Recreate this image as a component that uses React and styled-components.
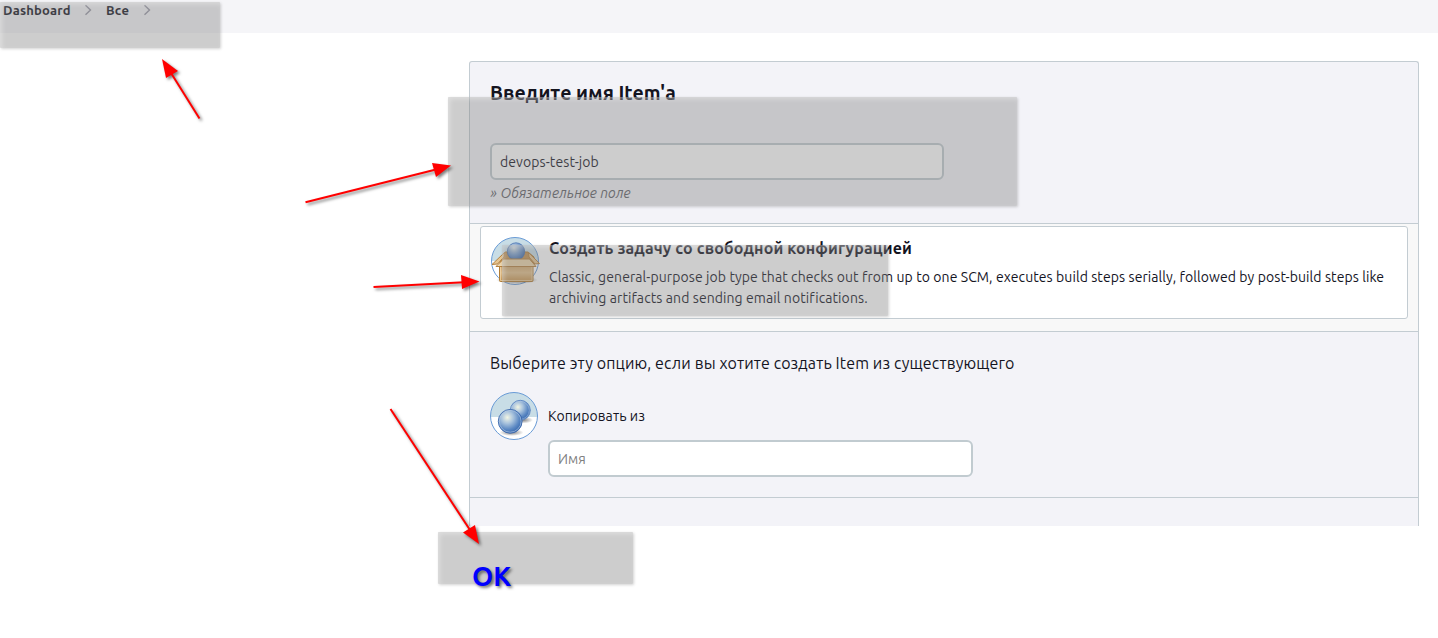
import React from "react";
import styled, { createGlobalStyle } from "styled-components";

const GlobalStyle = createGlobalStyle`
  * { box-sizing: border-box; }
  body {
    margin: 0;
    background: #fff;
    color: #14141f;
    font-family: Ubuntu, "Noto Sans", sans-serif;
    overflow: hidden;
  }
`;

const Page = styled.div`
  position: relative;
  height: 638px;
`;

const Breadcrumbs = styled.header`
  display: flex;
  height: 33px;
  padding-left: 3px;
  background: #f5f5f8;
`;

const Crumb = styled.span`
  width: ${(p) => p.$width}px;
  font-size: 13px;
  font-weight: 600;
  line-height: 20px;
  letter-spacing: 0.2px;
`;

const Chevron = styled.svg`
  width: 8px;
  height: 12px;
  margin: 4px 14px 0 0;
  fill: none;
  stroke: #9a9aa8;
  stroke-width: 1.4;
`;

const Main = styled.main`
  padding: 28px 19px 0 469px;
`;

const Panel = styled.form`
  border: 1px solid #c3ccd2;
  border-bottom: 0;
  border-radius: 3px 3px 0 0;
  background: #f3f3f8;
  overflow: hidden;
`;

const Section = styled.section`
  height: ${(p) => p.$height}px;
  padding: ${(p) => p.$padding || "0"};
  background: ${(p) => (p.$plain ? "#f8f8f8" : "transparent")};
  border-bottom: ${(p) => (p.$last ? "0" : "1px solid #c3ccd2")};
`;

const Heading = styled.h1`
  margin: 0 0 37px;
  font-size: 19.5px;
  font-weight: 700;
  line-height: 26px;
`;

const TextInput = styled.input`
  display: block;
  width: ${(p) => p.$width}px;
  height: 37px;
  padding: 0 8px;
  border: 2px solid #c1cbd0;
  border-radius: 6px;
  background: #fff;
  color: #14141f;
  font: 14px Ubuntu, "Noto Sans", sans-serif;
  letter-spacing: 0.09px;
  outline: 0;
  &::placeholder { color: #7f7f7f; }
`;

const Hint = styled.div`
  margin-top: 3px;
  color: #5f5f66;
  font-size: 14px;
  font-style: italic;
  line-height: 20px;
  letter-spacing: 0.1px;
`;

const JobCard = styled.div`
  display: flex;
  gap: 10px;
  height: 93px;
  padding: 10px;
  border: 1px solid #c3ccd2;
  border-radius: 3px;
  background: #fff;
`;

const JobTitle = styled.div`
  margin-bottom: 8px;
  font-size: 16px;
  font-weight: 700;
  line-height: 22px;
  letter-spacing: 0.135px;
`;

const JobText = styled.div`
  font-size: 14px;
  line-height: 21px;
  letter-spacing: 0.086px;
`;

const Icon = styled.svg`
  flex: none;
  width: 48px;
  height: 48px;
  overflow: visible;
`;

const CopyIntro = styled.p`
  margin: 0 0 17px;
  font-size: 16px;
  line-height: 24px;
  letter-spacing: 0.12px;
`;

const CopyRow = styled.div`
  display: flex;
  gap: 10px;
`;

const CopyLabel = styled.label`
  display: block;
  margin: 14px 0;
  font-size: 14px;
  line-height: 20px;
  letter-spacing: 0.09px;
`;

const Highlight = styled.div`
  position: absolute;
  left: ${(p) => p.$x}px;
  top: ${(p) => p.$y}px;
  width: ${(p) => p.$w}px;
  height: ${(p) => p.$h}px;
  border-radius: 1px;
  background: rgba(127, 127, 127, 0.39);
  box-shadow:
    inset 2px 2px 5px rgba(255, 255, 255, 0.35),
    1px 1px 3px rgba(0, 0, 0, 0.18);
`;

const OkButton = styled.span`
  position: absolute;
  left: 34px;
  top: 29px;
  color: #00f;
  font-size: 27px;
  font-weight: 700;
  line-height: 30px;
  text-shadow: 2px 2px 3px rgba(0, 0, 0, 0.5);
`;

const ArrowLayer = styled.svg`
  position: absolute;
  left: 0;
  top: 0;
  filter: drop-shadow(2px 2px 1.5px rgba(0, 0, 0, 0.5));
`;

const ARROWS = [
  { line: "M199.5 118.5L171 73", head: "162,59 178,71 166,78" },
  { line: "M305.5 202.3L436 169.5", head: "451,165.5 432,163 436,177" },
  { line: "M373.5 287L464 282.3", head: "479.5,281.5 461,275 462,289" },
  { line: "M390.5 409L470 530", head: "479,544 463,532.5 475,525" },
];

const Separator = () => (
  <Chevron viewBox="0 0 8 12">
    <path d="M1.5 1.2L6.5 6L1.5 10.8" />
  </Chevron>
);

const BoxIcon = () => (
  <Icon viewBox="0 0 48 48">
    <defs>
      <radialGradient id="ball" cx=".38" cy=".3" r=".75">
        <stop offset="0" stopColor="#d7e2e8" />
        <stop offset=".5" stopColor="#7fa3d1" />
        <stop offset="1" stopColor="#3d6aab" />
      </radialGradient>
      <linearGradient id="carton" x1="0" y1="0" x2="0" y2="1">
        <stop offset="0" stopColor="#cfa468" />
        <stop offset=".5" stopColor="#e3c08c" />
        <stop offset="1" stopColor="#c8954f" />
      </linearGradient>
      <radialGradient id="boxShade">
        <stop offset="0" stopColor="#000" stopOpacity=".6" />
        <stop offset="1" stopColor="#000" stopOpacity="0" />
      </radialGradient>
      <clipPath id="boxSky"><path d="M0 0H48V24H0Z" /></clipPath>
    </defs>
    <circle cx="24" cy="24" r="23.5" fill="#fff" />
    <circle cx="24" cy="24" r="23.5" fill="#c8dde6" clipPath="url(#boxSky)" />
    <circle cx="24" cy="24" r="23.5" fill="none" stroke="#699bd6" />
    <ellipse cx="26" cy="43" rx="21" ry="4" fill="url(#boxShade)" />
    <path d="M9 20L14 15H37L43 20V29H9Z" fill="#c39252" stroke="#b07c38" />
    <circle cx="25" cy="14.5" r="8.7" fill="url(#ball)" stroke="#4a74b4" strokeWidth=".8" />
    <path d="M8.5 27H42V43.5Q42 44.5 41 44.5H9.5Q8.5 44.5 8.5 43.5Z" fill="url(#carton)" stroke="#b17d35" />
    <path d="M9.5 28V43.5H41V28" fill="none" stroke="#f0d9b0" strokeOpacity=".7" />
    <path d="M13.5 15.5L1 27.5L6.5 27L13 20Z" fill="#e6c591" stroke="#b58240" />
    <path d="M37.5 15.5L48.5 26.5L44 27L38 20Z" fill="#e6c591" stroke="#b58240" />
    <path d="M12.5 22H38.5L45 29.5H5Z" fill="#f0dab3" fillOpacity=".92" stroke="#b58240" />
  </Icon>
);

const CopyIcon = () => (
  <Icon viewBox="0 0 48 48">
    <defs>
      <radialGradient id="orb" cx=".38" cy=".34" r=".72">
        <stop offset="0" stopColor="#f2f5e4" />
        <stop offset=".35" stopColor="#a9c3dd" />
        <stop offset=".7" stopColor="#5b88c3" />
        <stop offset="1" stopColor="#2f61a9" />
      </radialGradient>
      <radialGradient id="orbShade">
        <stop offset="0" stopColor="#000" stopOpacity=".5" />
        <stop offset="1" stopColor="#000" stopOpacity="0" />
      </radialGradient>
      <clipPath id="copySky"><path d="M0 0H48V25H0Z" /></clipPath>
    </defs>
    <circle cx="24" cy="24" r="23.5" fill="#fff" />
    <circle cx="24" cy="24" r="23.5" fill="#c8dde6" clipPath="url(#copySky)" />
    <circle cx="24" cy="24" r="23.5" fill="none" stroke="#699bd6" />
    <ellipse cx="33" cy="28" rx="10" ry="3.5" fill="url(#orbShade)" />
    <circle cx="30.3" cy="18.3" r="10" fill="url(#orb)" stroke="#5c86c2" strokeWidth=".9" />
    <circle cx="30.3" cy="18.3" r="9" fill="none" stroke="#bcd0e8" strokeOpacity=".6" strokeWidth=".8" />
    <ellipse cx="21.5" cy="40.5" rx="12" ry="3.5" fill="url(#orbShade)" />
    <circle cx="20.2" cy="29.3" r="11.9" fill="url(#orb)" stroke="#3b68ad" strokeWidth=".9" />
    <circle cx="20.2" cy="29.3" r="10.9" fill="none" stroke="#bcd0e8" strokeOpacity=".7" strokeWidth=".8" />
  </Icon>
);

export default function App() {
  return (
    <Page>
      <GlobalStyle />
      <Breadcrumbs>
        <Crumb $width={81}>Dashboard</Crumb>
        <Separator />
        <Crumb $width={37}>Все</Crumb>
        <Separator />
      </Breadcrumbs>
      <Main>
        <Panel>
          <Section $height={162} $padding="18px 20px 0">
            <Heading>Введите имя Item'а</Heading>
            <TextInput $width={454} defaultValue="devops-test-job" />
            <Hint>» Обязательное поле</Hint>
          </Section>
          <Section $height={108} $padding="2px 10px 0" $plain>
            <JobCard>
              <BoxIcon />
              <div>
                <JobTitle>Создать задачу со свободной конфигурацией</JobTitle>
                <JobText>
                  Classic, general-purpose job type that checks out from up to one SCM, executes build steps
                  serially, followed by post-build steps like archiving artifacts and sending email notifications.
                </JobText>
              </div>
            </JobCard>
          </Section>
          <Section $height={166} $padding="19px 20px 0">
            <CopyIntro>Выберите эту опцию, если вы хотите создать Item из существующего</CopyIntro>
            <CopyRow>
              <CopyIcon />
              <div>
                <CopyLabel htmlFor="from">Копировать из</CopyLabel>
                <TextInput id="from" $width={425} placeholder="Имя" />
              </div>
            </CopyRow>
          </Section>
          <Section $height={28} $last />
        </Panel>
      </Main>

      <Highlight $x={0} $y={2} $w={220} $h={46} />
      <Highlight $x={448} $y={97} $w={569} $h={109} />
      <Highlight $x={502} $y={245} $w={386} $h={71} />
      <Highlight $x={438} $y={532} $w={195} $h={52}>
        <OkButton>OK</OkButton>
      </Highlight>
      <ArrowLayer width="1438" height="638">
        {ARROWS.map((a) => (
          <g key={a.line}>
            <path d={a.line} stroke="#f00" strokeWidth="2" />
            <polygon points={a.head} fill="#f00" />
          </g>
        ))}
      </ArrowLayer>
    </Page>
  );
}
